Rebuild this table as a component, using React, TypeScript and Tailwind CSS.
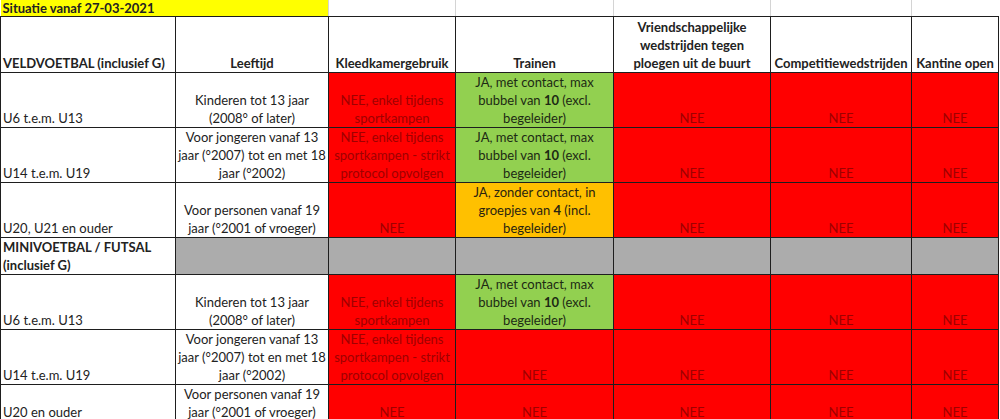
const RED = "bg-[#ff0000] text-[#9e0000]";
const GREEN = "bg-[#92d050] text-[#1d2a14]";
const ORANGE = "bg-[#ffc000] text-[#2a2410]";
const GRAY = "bg-[#acacac]";

type Cell = { text: React.ReactNode; cls: string };

const nee = (t: React.ReactNode = "NEE"): Cell => ({ text: t, cls: RED });

const groen: Cell = {
  text: (
    <>
      JA, met contact, max bubbel van <b>10</b> (excl. begeleider)
    </>
  ),
  cls: GREEN,
};

const oranje: Cell = {
  text: (
    <>
      JA, zonder contact, in groepjes van <b>4</b> (incl. begeleider)
    </>
  ),
  cls: ORANGE,
};

const kleed1 = nee("NEE, enkel tijdens sportkampen");
const kleed2 = nee("NEE, enkel tijdens sportkampen - strikt protocol opvolgen");

type Row = { cat: string; age: string; cells: Cell[]; h: string };

const veld: Row[] = [
  {
    cat: "U6 t.e.m. U13",
    age: "Kinderen tot 13 jaar (2008° of later)",
    cells: [kleed1, groen, nee(), nee(), nee()],
    h: "h-[54px]",
  },
  {
    cat: "U14 t.e.m. U19",
    age: "Voor jongeren vanaf 13 jaar (°2007) tot en met 18 jaar (°2002)",
    cells: [kleed2, groen, nee(), nee(), nee()],
    h: "h-[55px]",
  },
  {
    cat: "U20, U21 en ouder",
    age: "Voor personen vanaf 19 jaar (°2001 of vroeger)",
    cells: [nee(), oranje, nee(), nee(), nee()],
    h: "h-[55px]",
  },
];

const mini: Row[] = [
  {
    cat: "U6 t.e.m. U13",
    age: "Kinderen tot 13 jaar (2008° of later)",
    cells: [kleed1, groen, nee(), nee(), nee()],
    h: "h-[54px]",
  },
  {
    cat: "U14 t.e.m. U19",
    age: "Voor jongeren vanaf 13 jaar (°2007) tot en met 18 jaar (°2002)",
    cells: [kleed2, nee(), nee(), nee(), nee()],
    h: "h-[55px]",
  },
  {
    cat: "U20 en ouder",
    age: "Voor personen vanaf 19 jaar (°2001 of vroeger)",
    cells: [nee(), nee(), nee(), nee(), nee()],
    h: "h-[36px]",
  },
];

const td = "border border-[#1e1e1e] align-bottom text-center px-[2px] leading-[18px]";

function BodyRow({ row }: { row: Row }) {
  return (
    <tr className={row.h}>
      <td className={`${td} text-left pl-[2px]`}>{row.cat}</td>
      <td className={td}>{row.age}</td>
      {row.cells.map((c, i) => (
        <td key={i} className={`${td} ${c.cls}`}>
          {c.text}
        </td>
      ))}
    </tr>
  );
}

export default function App() {
  return (
    <div className="w-[1000px] h-[419px] bg-white overflow-hidden text-[13px] text-[#222] font-['Lato',sans-serif]">
      <table className="table-fixed border-collapse w-[998px]">
        <colgroup>
          <col className="w-[175px]" />
          <col className="w-[153px]" />
          <col className="w-[127px]" />
          <col className="w-[158px]" />
          <col className="w-[157px]" />
          <col className="w-[141px]" />
          <col className="w-[87px]" />
        </colgroup>
        <tbody>
          <tr className="h-[16px]">
            <td colSpan={2} className="bg-[#ffff00] font-bold leading-[16px] pl-[2px] border-b border-[#1e1e1e]">
              Situatie vanaf 27-03-2021
            </td>
            <td className="border-l border-r border-b border-l-[#d4d4d4] border-r-[#d4d4d4] border-b-[#1e1e1e]" />
            <td className="border-r border-b border-r-[#d4d4d4] border-b-[#1e1e1e]" />
            <td className="border-r border-b border-r-[#d4d4d4] border-b-[#1e1e1e]" />
            <td className="border-r border-b border-r-[#d4d4d4] border-b-[#1e1e1e]" />
            <td className="border-b border-[#1e1e1e]" />
          </tr>
          <tr className="h-[56px] font-bold">
            <td className={`${td} text-left`}>VELDVOETBAL (inclusief G)</td>
            <td className={td}>Leeftijd</td>
            <td className={td}>Kleedkamergebruik</td>
            <td className={td}>Trainen</td>
            <td className={td}>Vriendschappelijke wedstrijden tegen ploegen uit de buurt</td>
            <td className={`${td} whitespace-nowrap`}>Competitiewedstrijden</td>
            <td className={`${td} whitespace-nowrap`}>Kantine open</td>
          </tr>
          {veld.map((r, i) => (
            <BodyRow key={i} row={r} />
          ))}
          <tr className="h-[36px]">
            <td className={`${td} text-left font-bold align-top`}>
              MINIVOETBAL / FUTSAL (inclusief G)
            </td>
            {[0, 1, 2, 3, 4, 5].map((i) => (
              <td key={i} className={`${td} ${GRAY}`} />
            ))}
          </tr>
          {mini.map((r, i) => (
            <BodyRow key={i} row={r} />
          ))}
        </tbody>
      </table>
    </div>
  );
}
